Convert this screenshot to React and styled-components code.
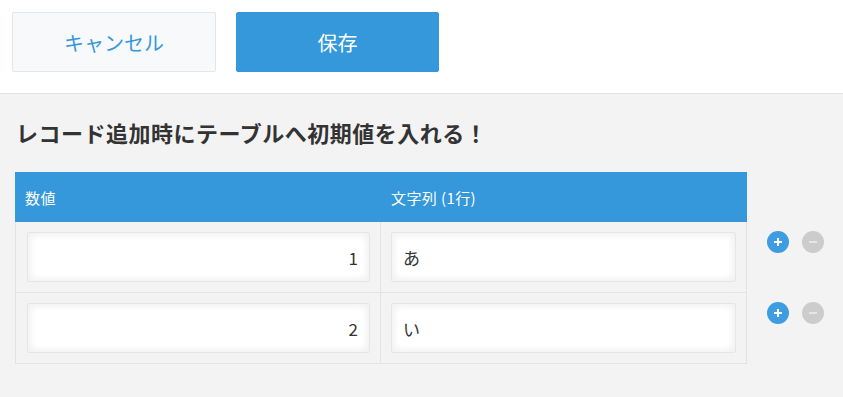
import React from 'react';
import styled, { createGlobalStyle } from 'styled-components';

const GlobalStyle = createGlobalStyle`
  html, body {
    margin: 0;
    padding: 0;
    background: #f3f3f3;
    font-family: "Noto Sans CJK JP", "Noto Sans", sans-serif;
    color: #333;
  }
`;

const Page = styled.div`
  min-height: 397px;
  background: #f3f3f3;
`;

const Toolbar = styled.div`
  display: flex;
  gap: 20px;
  padding: 12px 12px 0;
  height: 81px;
  background: #fff;
  border-bottom: 1px solid #e3e3e3;
`;

const Button = styled.button`
  box-sizing: border-box;
  width: ${props => props.$primary ? '203px' : '204px'};
  height: 60px;
  border-radius: 2px;
  border: 1px solid ${props => props.$primary ? '#3498db' : '#e3e7e8'};
  background: ${props => props.$primary ? '#3498db' : '#f7f9fa'};
  color: ${props => props.$primary ? '#fff' : '#3498db'};
  font-family: inherit;
  font-size: 20px;
  cursor: pointer;
`;

const Content = styled.div`
  padding: 22px 15px 0;
`;

const Title = styled.h2`
  margin: 0 0 23px 1px;
  font-size: 22px;
  line-height: 33px;
  letter-spacing: 0.5px;
  font-weight: 700;
  color: #333;
`;

const Table = styled.div`
  display: grid;
  grid-template-columns: 366px 366px auto;
`;

const HeadCell = styled.div`
  box-sizing: border-box;
  height: 50px;
  display: flex;
  align-items: center;
  padding-left: 10px;
  background: #3498db;
  color: #fff;
  font-size: 15px;
  letter-spacing: 0.4px;
`;

const Spacer = styled.div``;

const Cell = styled.div`
  box-sizing: border-box;
  padding: 10px 10px 10px ${props => props.$first ? '11px' : '10px'};
  border-bottom: 1px solid #e3e3e3;
  border-right: 1px solid #e3e3e3;
  border-left: ${props => props.$first ? '1px solid #e3e3e3' : 'none'};
`;

const Input = styled.div`
  box-sizing: border-box;
  height: 50px;
  display: flex;
  align-items: center;
  justify-content: ${props => props.$align === 'right' ? 'flex-end' : 'flex-start'};
  padding: 0 11px;
  background: #fff;
  border: 1px solid #e3e7e8;
  border-radius: 2px;
  box-shadow: inset 1px 1px 8px #f0f0f0, inset -1px -1px 8px #f0f0f0;
  font-size: 17px;
  color: #333;
`;

const Actions = styled.div`
  display: flex;
  gap: 13px;
  padding: 9px 0 0 20px;
`;

const RoundButton = styled.button`
  width: 22px;
  height: 22px;
  padding: 0;
  border: none;
  border-radius: 50%;
  background: ${props => props.$add ? '#3d9de0' : '#cccccc'};
  display: flex;
  align-items: center;
  justify-content: center;
  cursor: pointer;
`;

const PlusIcon = () => (
  <svg width="10" height="10" viewBox="0 0 10 10">
    <path d="M5 1v8M1 5h8" stroke="#fff" strokeWidth="2" />
  </svg>
);

const MinusIcon = () => (
  <svg width="10" height="10" viewBox="0 0 10 10">
    <path d="M1 5h8" stroke="#e6e6e6" strokeWidth="2" />
  </svg>
);

const rows = [
  { num: '1', text: 'あ' },
  { num: '2', text: 'い' },
];

export default function App() {
  return (
    <Page>
      <GlobalStyle />
      <Toolbar>
        <Button>キャンセル</Button>
        <Button $primary>保存</Button>
      </Toolbar>
      <Content>
        <Title>レコード追加時にテーブルへ初期値を入れる！</Title>
        <Table>
          <HeadCell>数値</HeadCell>
          <HeadCell>文字列 (1行)</HeadCell>
          <Spacer />
          {rows.map(row => (
            <React.Fragment key={row.num}>
              <Cell $first>
                <Input $align="right">{row.num}</Input>
              </Cell>
              <Cell>
                <Input>{row.text}</Input>
              </Cell>
              <Actions>
                <RoundButton $add><PlusIcon /></RoundButton>
                <RoundButton><MinusIcon /></RoundButton>
              </Actions>
            </React.Fragment>
          ))}
        </Table>
      </Content>
    </Page>
  );
}
